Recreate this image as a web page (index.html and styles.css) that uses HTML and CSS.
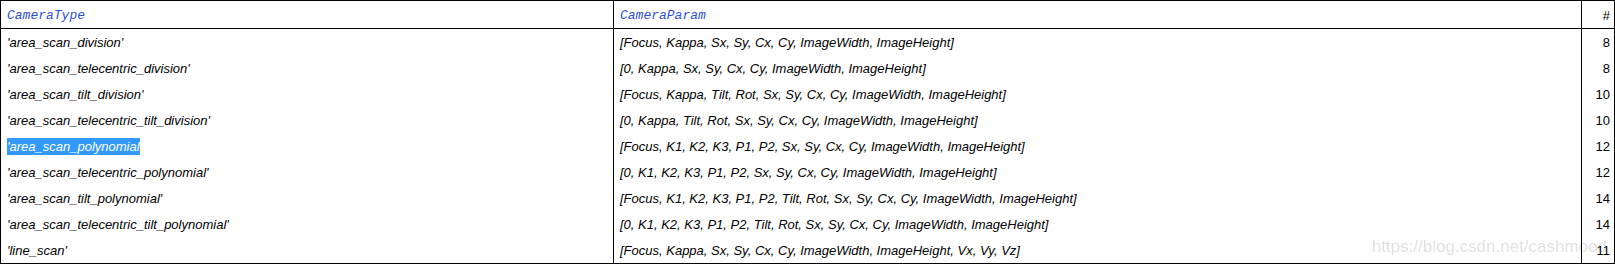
FILE: index.html
```html
<!DOCTYPE html>
<html>
<head>
<meta charset="utf-8">
<link rel="stylesheet" href="styles.css">
</head>
<body>
<div class="tbl">
  <div class="row head">
    <div class="cell c1 code">CameraType</div>
    <div class="cell c2 code">CameraParam</div>
    <div class="cell c3">#</div>
  </div>
  <div class="body">
    <div class="row"><div class="cell c1 it">'area_scan_division'</div><div class="cell c2 it">[Focus, Kappa, Sx, Sy, Cx, Cy, ImageWidth, ImageHeight]</div><div class="cell c3">8</div></div>
    <div class="row"><div class="cell c1 it">'area_scan_telecentric_division'</div><div class="cell c2 it">[0, Kappa, Sx, Sy, Cx, Cy, ImageWidth, ImageHeight]</div><div class="cell c3">8</div></div>
    <div class="row"><div class="cell c1 it">'area_scan_tilt_division'</div><div class="cell c2 it">[Focus, Kappa, Tilt, Rot, Sx, Sy, Cx, Cy, ImageWidth, ImageHeight]</div><div class="cell c3">10</div></div>
    <div class="row"><div class="cell c1 it">'area_scan_telecentric_tilt_division'</div><div class="cell c2 it">[0, Kappa, Tilt, Rot, Sx, Sy, Cx, Cy, ImageWidth, ImageHeight]</div><div class="cell c3">10</div></div>
    <div class="row"><div class="cell c1 it"><span class="sel">'area_scan_polynomial</span></div><div class="cell c2 it">[Focus, K1, K2, K3, P1, P2, Sx, Sy, Cx, Cy, ImageWidth, ImageHeight]</div><div class="cell c3">12</div></div>
    <div class="row"><div class="cell c1 it">'area_scan_telecentric_polynomial'</div><div class="cell c2 it">[0, K1, K2, K3, P1, P2, Sx, Sy, Cx, Cy, ImageWidth, ImageHeight]</div><div class="cell c3">12</div></div>
    <div class="row"><div class="cell c1 it">'area_scan_tilt_polynomial'</div><div class="cell c2 it">[Focus, K1, K2, K3, P1, P2, Tilt, Rot, Sx, Sy, Cx, Cy, ImageWidth, ImageHeight]</div><div class="cell c3">14</div></div>
    <div class="row"><div class="cell c1 it">'area_scan_telecentric_tilt_polynomial'</div><div class="cell c2 it">[0, K1, K2, K3, P1, P2, Tilt, Rot, Sx, Sy, Cx, Cy, ImageWidth, ImageHeight]</div><div class="cell c3">14</div></div>
    <div class="row"><div class="cell c1 it">'line_scan'</div><div class="cell c2 it">[Focus, Kappa, Sx, Sy, Cx, Cy, ImageWidth, ImageHeight, Vx, Vy, Vz]</div><div class="cell c3">11</div></div>
  </div>
  <div class="watermark">https://blog.csdn.net/cashmood</div>
</div>
</body>
</html>
```
FILE: styles.css
```css
html, body {
  margin: 0;
  padding: 0;
  background: #fff;
}
body {
  font-family: "Liberation Sans", Arial, sans-serif;
  font-size: 13px;
  color: #000;
}
.tbl {
  position: relative;
  width: 1615px;
  box-sizing: border-box;
  border: 1px solid #000;
  border-bottom-width: 1px;
}
.row {
  display: grid;
  grid-template-columns: 612px 968px 33px;
  height: 26px;
}
.row.head {
  height: 28px;
  box-sizing: border-box;
  border-bottom: 1px solid #000;
}
.cell {
  display: flex;
  align-items: center;
  padding-left: 6px;
  white-space: nowrap;
  box-sizing: border-box;
}
.c2, .c3 {
  border-left: 1px solid #000;
}
.c3 {
  justify-content: flex-end;
  padding-left: 0;
  padding-right: 4px;
}
.head .cell {
  padding-top: 1px;
}
.code {
  font-family: "Liberation Mono", "Courier New", monospace;
  font-style: italic;
  font-size: 13px;
  color: #2b4fd4;
}
.it {
  font-style: italic;
}
.sel {
  background: #3399ff;
  color: #fff;
  padding: 1px 0;
}
.watermark {
  position: absolute;
  right: 7px;
  bottom: 6px;
  font-family: "Liberation Sans", Arial, sans-serif;
  font-size: 17px;
  color: rgba(0, 0, 0, 0.14);
  pointer-events: none;
}
```
